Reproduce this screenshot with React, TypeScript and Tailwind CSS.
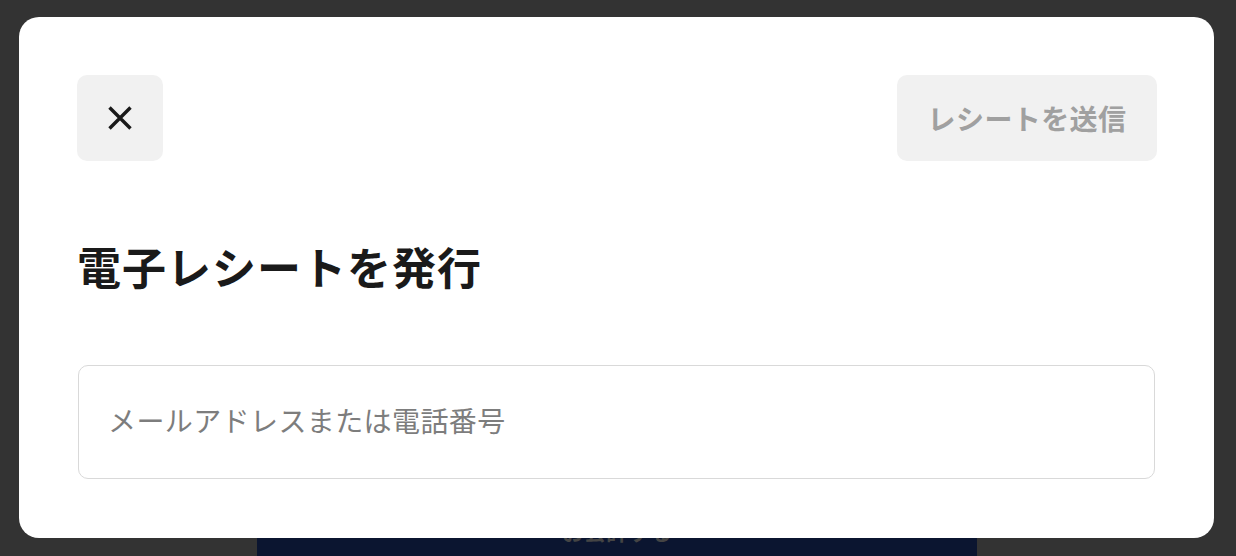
const jp = { fontFamily: '"Noto Sans CJK JP", "Noto Sans", sans-serif' };

function CloseIcon() {
  return (
    <svg width="24" height="24" viewBox="0 0 24 24" fill="none" stroke="#1a1a1a" strokeWidth="3.4">
      <path d="M1.5 1.5 22.5 22.5M22.5 1.5 1.5 22.5" />
    </svg>
  );
}

export default function App() {
  return (
    <div className="flex h-[556px] w-[1236px] flex-col overflow-hidden bg-[#333333]" style={jp}>
      <div className="relative z-10 ml-[19px] mr-[22px] mt-[17px] flex h-[521px] flex-col rounded-[20px] bg-white px-[58px] pt-[58px]">
        <div className="flex items-center justify-between">
          <button className="flex h-[86px] w-[86px] items-center justify-center rounded-[10px] bg-[#f1f1f1]">
            <CloseIcon />
          </button>
          <button className="-mr-[1px] flex h-[86px] w-[260px] items-center justify-center rounded-[10px] bg-[#f1f1f1] text-[28px] font-bold tracking-[0.4px] text-[#a0a0a0]">
            レシートを送信
          </button>
        </div>

        <h1 className="mt-[83px] text-[44px] font-bold leading-[44px] tracking-[1px] text-[#1a1a1a]">
          電子レシートを発行
        </h1>

        <div className="mx-[1px] mt-[77px] flex h-[114px] items-center rounded-[10px] border border-[#d9d9d9] px-[29px] pb-[4px]">
          <input
            className="w-full bg-transparent text-[28px] tracking-[0.4px] text-[#1a1a1a] outline-none placeholder:text-[#7d7d7d]"
            placeholder="メールアドレスまたは電話番号"
            style={jp}
          />
        </div>
      </div>

      <div className="relative z-0 ml-[257px] mr-[259px] flex flex-1 justify-center bg-[#0b1530]">
        <span className="-mt-[19px] text-[22px] font-bold leading-[22px] text-[#444444]">
          お会計する
        </span>
      </div>
    </div>
  );
}
